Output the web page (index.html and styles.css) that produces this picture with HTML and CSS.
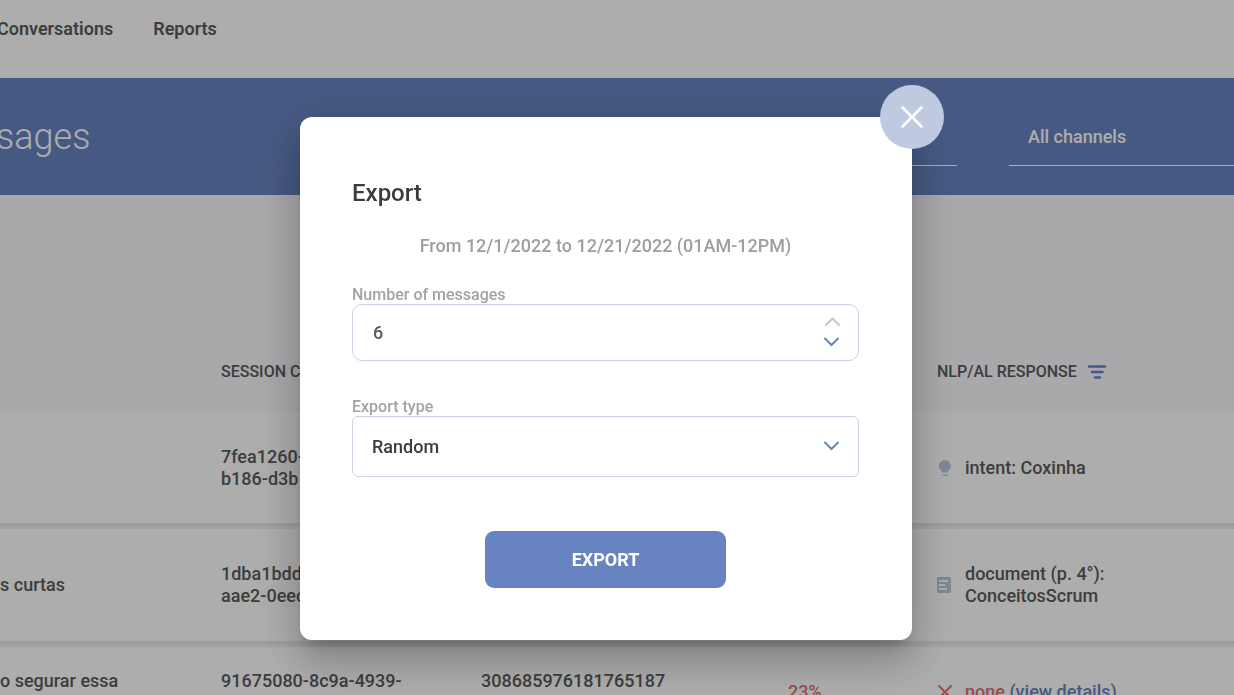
FILE: index.html
```html
<!DOCTYPE html>
<html lang="en">
<head>
    <meta charset="UTF-8">
    <meta name="viewport" content="width=device-width, initial-scale=1">
    <title>Export</title>
    <link rel="stylesheet" href="styles.css">
</head>
<body>

<div class="page">
    <nav class="topnav">
        <a href="#">Conversations</a>
        <a href="#">Reports</a>
    </nav>

    <header class="banner">
        <h1>Messages</h1>
        <div class="filters">
            <select class="filter filter-date" aria-label="Period">
                <option></option>
            </select>
            <select class="filter filter-channel" aria-label="Channel">
                <option>All channels</option>
            </select>
        </div>
    </header>

    <table class="messages">
        <colgroup>
            <col class="col-text">
            <col class="col-session">
            <col class="col-user">
            <col class="col-score">
            <col>
        </colgroup>
        <thead>
        <tr>
            <th></th>
            <th>SESSION CODE</th>
            <th></th>
            <th></th>
            <th>
                <span class="with-icon">NLP/AL RESPONSE
                    <svg class="icon-filter" width="20" height="16" viewBox="0 0 20 16">
                        <path d="M2 2.500h16M5 8h10.500M8 13.500h5"/>
                    </svg>
                </span>
            </th>
        </tr>
        </thead>
        <tbody>
        <tr class="first">
            <td></td>
            <td>7fea1260-<br>b186-d3b</td>
            <td></td>
            <td></td>
            <td>
                <div class="response">
                    <svg class="icon-soft" width="16" height="18" viewBox="0 0 16 18">
                        <path d="M8 1a6 6 0 0 0-6 6c0 2.300 1.200 3.900 2.800 5v1.500h6.400V12C12.800 10.900 14 9.300 14 7a6 6 0 0 0-6-6z"/>
                        <path d="M5 15.500h6v1.300H5z"/>
                    </svg>
                    <span>intent: Coxinha</span>
                </div>
            </td>
        </tr>
        <tr>
            <td>s curtas</td>
            <td>1dba1bdd-<br>aae2-0eec</td>
            <td></td>
            <td></td>
            <td>
                <div class="response">
                    <svg class="icon-soft" width="16" height="18" viewBox="0 0 16 18">
                        <path fill-rule="evenodd" d="M1.500 1h11A1.500 1.500 0 0 1 14 2.500v13a1.500 1.500 0 0 1-1.500 1.500h-11A1.500 1.500 0 0 1 0 15.500v-13A1.500 1.500 0 0 1 1.500 1zM2 4v2h9V4zM2 8v2h6V8zM2 12v2h8v-2z"/>
                    </svg>
                    <span>document (p. 4°):<br>ConceitosScrum</span>
                </div>
            </td>
        </tr>
        <tr class="short">
            <td>o segurar essa<br>&nbsp;</td>
            <td>91675080-8c9a-4939-<br>&nbsp;</td>
            <td>308685976181765187<br>&nbsp;</td>
            <td class="low">23%</td>
            <td>
                <div class="response">
                    <svg class="icon-none" width="16" height="18" viewBox="0 0 16 18">
                        <path d="M2 3l12 12M14 3L2 15"/>
                    </svg>
                    <span><span class="low">none</span> <a href="#">(view details)</a></span>
                </div>
            </td>
        </tr>
        </tbody>
    </table>
</div>

<div class="overlay">
    <div class="modal" role="dialog" aria-modal="true" aria-labelledby="export-title">
        <button class="close" type="button" aria-label="Close">
            <svg width="24" height="24" viewBox="0 0 24 24">
                <path d="M2.500 2.500l19 19M21.500 2.500l-19 19"/>
            </svg>
        </button>

        <h2 id="export-title">Export</h2>
        <p class="period">From 12/1/2022 to 12/21/2022 (01AM-12PM)</p>

        <form>
            <label for="number">Number of messages</label>
            <div class="field">
                <input id="number" class="control control-number" type="text" inputmode="numeric" value="6">
                <div class="stepper">
                    <button type="button" class="step step-up" aria-label="Increase">
                        <svg width="16" height="10" viewBox="0 0 16 10"><path d="M2 8l6.500-6.500L15 8"/></svg>
                    </button>
                    <button type="button" class="step" aria-label="Decrease">
                        <svg width="16" height="10" viewBox="0 0 16 10"><path d="M1 1.500L7.500 8 14 1.500"/></svg>
                    </button>
                </div>
            </div>

            <label for="type">Export type</label>
            <div class="field">
                <select id="type" class="control control-select">
                    <option>Random</option>
                </select>
                <svg class="arrow" width="16" height="10" viewBox="0 0 16 10"><path d="M1 1.500L7.500 8 14 1.500"/></svg>
            </div>

            <button class="submit" type="submit">EXPORT</button>
        </form>
    </div>
</div>

</body>
</html>
```

FILE: styles.css
```css
* {
    box-sizing: border-box;
}

body {
    margin: 0;
    height: 100vh;
    overflow: hidden;
    font-family: Roboto, sans-serif;
    font-size: 18px;
    font-weight: 500;
    line-height: 22px;
    color: #5b5b5b;
    background: #fff;
}

button,
input,
select {
    font: inherit;
    margin: 0;
}

a {
    text-decoration: none;
}

svg {
    display: block;
    flex: none;
    fill: none;
    stroke-linecap: round;
}

/* page behind the dialog, scrolled a little to the right */
.page {
    height: 100vh;
    margin-left: -72px;
    overflow: hidden;
}

.topnav {
    display: flex;
    gap: 40px;
    height: 78px;
    padding: 18px 69px;
}

.topnav a {
    color: #5b5b5b;
    font-weight: 600;
}

.banner {
    display: flex;
    justify-content: space-between;
    align-items: center;
    height: 117px;
    background: #6884c0;
    color: #fff;
}

.banner h1 {
    margin: 0;
    font-size: 36px;
    font-weight: 300;
    line-height: 44px;
}

.filters {
    display: flex;
    gap: 52px;
}

.filter {
    appearance: none;
    height: 58px;
    padding: 2px 19px 0;
    border: 0;
    border-bottom: 1px solid #fff;
    border-radius: 0;
    background: none;
    color: #fff;
}

.filter-date {
    width: 260px;
}

.filter-channel {
    width: 225px;
}

.messages {
    width: 100%;
    table-layout: fixed;
    border-collapse: collapse;
    text-align: left;
}

.col-text {
    width: 293px;
}

.col-session {
    width: 260px;
}

.col-user {
    width: 307px;
}

.col-score {
    width: 149px;
}

.messages th {
    height: 217px;
    padding: 0 0 29px;
    vertical-align: bottom;
    background: #f9f9fc;
    font-size: 16px;
    font-weight: 500;
}

.messages td {
    height: 118px;
    padding: 0 0 6px;
    background: linear-gradient(#dfe7ef, #eef2f5) bottom / 100% 6px no-repeat;
}

.messages .first td {
    height: 117px;
}

.messages .short td {
    height: 96px;
}

.messages td:first-child {
    padding-left: 72px;
}

.messages a {
    color: #6884c0;
}

.with-icon {
    display: flex;
    align-items: center;
    gap: 10px;
}

.response {
    display: flex;
    align-items: center;
    gap: 12px;
}

.low {
    color: #e0726c;
}

.icon-filter {
    stroke: #6884c0;
    stroke-width: 2.500;
}

.icon-soft {
    fill: #bcc7df;
}

.icon-none {
    stroke: #e0726c;
    stroke-width: 2;
}

.overlay {
    position: fixed;
    inset: 0;
    display: flex;
    justify-content: center;
    align-items: flex-start;
    padding: 117px 22px 0 0;
    background: rgba(0, 0, 0, 0.32);
}

.modal {
    position: relative;
    width: 612px;
    padding: 62px 53px 52px 52px;
    border-radius: 12px;
    background: #fff;
    box-shadow: 0 11px 15px -7px rgba(0, 0, 0, 0.2),
        0 24px 38px 3px rgba(0, 0, 0, 0.14),
        0 9px 46px 8px rgba(0, 0, 0, 0.12);
}

.close {
    position: absolute;
    top: -32px;
    right: -32px;
    display: flex;
    justify-content: center;
    align-items: center;
    width: 64px;
    height: 64px;
    padding: 0;
    border: 0;
    border-radius: 50%;
    background: #bfc9e0;
    cursor: pointer;
}

.close svg {
    stroke: #fff;
    stroke-width: 2.500;
}

.modal h2 {
    margin: 0 0 27px;
    font-size: 24px;
    font-weight: 500;
    line-height: 28px;
    color: #3c3c3c;
}

.period {
    margin: 0 0 27px;
    text-align: center;
    line-height: 24px;
    color: #9e9e9e;
}

.modal label {
    display: block;
    font-size: 16px;
    line-height: 19px;
    color: #a3a3a3;
}

.field {
    position: relative;
    margin-bottom: 36px;
}

.control {
    display: block;
    width: 100%;
    border: 1px solid #c9d1e4;
    background: #fff;
}

.control-number {
    height: 57px;
    padding: 0 20px;
    border-radius: 10px;
    color: #5b5b5b;
}

.control-select {
    appearance: none;
    height: 61px;
    padding: 0 19px;
    border-radius: 6px;
    color: #3c3c3c;
}

.stepper {
    position: absolute;
    top: 13px;
    right: 19px;
    display: grid;
    gap: 10px;
}

.step {
    padding: 0;
    border: 0;
    background: none;
    cursor: pointer;
}

.step svg,
.arrow {
    stroke: #6884c0;
    stroke-width: 2;
}

.step-up svg {
    stroke: #bfc9e0;
}

.arrow {
    position: absolute;
    top: 25px;
    right: 19px;
    pointer-events: none;
}

.submit {
    display: block;
    width: 241px;
    height: 57px;
    margin: 54px auto 0;
    border: 0;
    border-radius: 9px;
    background: #6884c0;
    color: #fff;
    font-weight: 700;
    cursor: pointer;
}
```
